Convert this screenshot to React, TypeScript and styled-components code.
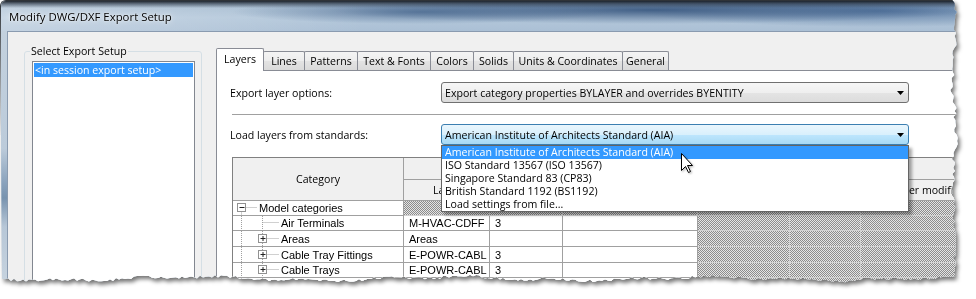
import React from 'react';
import styled, { createGlobalStyle } from 'styled-components';

const UI = `"Open Sans", "Segoe UI", "Liberation Sans", sans-serif`;
const GRID = `"Liberation Sans", Arial, sans-serif`;
const FS = '10.6px';

const GlobalStyle = createGlobalStyle`
  html, body {
    margin: 0;
    padding: 0;
    background: #fff;
  }
  body {
    font-family: ${UI};
    font-size: ${FS};
    color: #000;
  }
`;

// torn-paper outline of the cut-out screenshot (right and bottom edges)
const tornEdge = (() => {
  let s = 11;
  const rnd = () => {
    s = (s * 16807) % 2147483647;
    return s / 2147483647;
  };
  const pts: string[] = ['0px 0px'];
  for (let y = 0; y <= 276; y += 3) {
    const x = 954 + Math.sin(y / 17) * 1.6 + Math.sin(y / 5.3) * 0.9 + (rnd() - 0.5) * 3.2;
    pts.push(`${x.toFixed(1)}px ${y}px`);
  }
  for (let x = 950; x >= 0; x -= 3) {
    const y = 278.5 + Math.sin(x / 41) * 1.6 + Math.sin(x / 13) * 0.9 + (rnd() - 0.5) * 2.8;
    pts.push(`${x}px ${y.toFixed(1)}px`);
  }
  return `polygon(${pts.join(', ')})`;
})();

const CHECKER = `
  background-color: #b4b4b4;
  background-image: repeating-conic-gradient(#8c8c8c 0% 25%, #e4e4e4 0% 50%);
  background-size: 2px 2px;
`;

const Stage = styled.div`
  width: 976px;
  height: 299px;
  overflow: hidden;
  background: #fff;
`;

const Shadow = styled.div`
  width: 964px;
  height: 292px;
  filter: drop-shadow(2px 3px 2px rgba(0, 0, 0, 0.55));
`;

const Win = styled.div`
  box-sizing: border-box;
  width: 964px;
  height: 292px;
  display: flex;
  flex-direction: column;
  border-top: 1px solid #2f3338;
  border-left: 1px solid #2f3338;
  border-top-left-radius: 6px;
  background: #c6d3df;
  clip-path: ${tornEdge};
  overflow: hidden;
`;

const TitleBar = styled.div`
  flex: none;
  box-sizing: border-box;
  height: 30px;
  display: flex;
  align-items: center;
  padding: 1px 0 0 8px;
  background:
    linear-gradient(180deg, rgba(20, 26, 34, 0.92) 0px, rgba(35, 45, 60, 0.55) 3px, rgba(40, 50, 62, 0) 7px),
    radial-gradient(190px 12px at 420px 11px, rgba(55, 88, 130, 0.65), rgba(55, 88, 130, 0)),
    radial-gradient(320px 14px at 650px 9px, rgba(40, 72, 115, 0.8), rgba(40, 72, 115, 0)),
    radial-gradient(240px 16px at 880px 10px, rgba(55, 92, 140, 0.7), rgba(55, 92, 140, 0)),
    linear-gradient(90deg, rgba(255, 255, 255, 0.3) 0%, rgba(255, 255, 255, 0) 38%),
    linear-gradient(180deg, #9fb6cc 0%, #b3c7da 55%, #abc0d5 100%);
`;

const Caption = styled.span`
  font-family: ${UI};
  font-size: 11.4px;
  color: #000;
  text-shadow: 0 0 6px rgba(255, 255, 255, 0.9), 0 0 2px rgba(255, 255, 255, 0.8);
`;

const Frame = styled.div`
  flex: 1;
  min-height: 0;
  display: flex;
  padding-left: 6px;
  background: linear-gradient(
    180deg,
    #c3d1de 0%,
    #bccbda 45%,
    #8aa3bd 58%,
    #7893af 64%,
    #b7c7d7 75%,
    #c9d5e0 100%
  );
`;

const Client = styled.div`
  flex: 1;
  min-width: 0;
  display: flex;
  align-items: flex-start;
  padding-left: 16px;
  background: #f0f0f0;
  border-top: 1px solid #8a9bb0;
  border-left: 1px solid #8a9bb0;
  overflow: hidden;
`;

const SetupGroup = styled.fieldset`
  box-sizing: border-box;
  flex: none;
  width: 178px;
  height: 250px;
  min-width: 0;
  margin: 12px 0 0;
  padding: 2px 6px 0 7px;
  border: 1px solid #d5dfe5;
  border-radius: 3px;
`;

const GroupTitle = styled.legend`
  padding: 0 1px;
  margin-left: -2px;
  font-family: ${UI};
  font-size: ${FS};
  line-height: 15px;
`;

const ListBox = styled.div`
  box-sizing: border-box;
  width: 163px;
  height: 230px;
  padding: 1px;
  border: 1px solid #828790;
  background: #fff;
`;

const ListItem = styled.div<{ $selected?: boolean }>`
  height: 14px;
  line-height: 14px;
  padding-left: 1px;
  font-family: ${UI};
  font-size: ${FS};
  white-space: nowrap;
  color: ${(p) => (p.$selected ? '#fff' : '#000')};
  background: ${(p) => (p.$selected ? '#3399ff' : 'transparent')};
`;

const TabControl = styled.div`
  flex: none;
  width: 760px;
  margin: 16px 0 0 14px;
`;

const TabStrip = styled.div`
  position: relative;
  z-index: 1;
  display: flex;
  align-items: flex-end;
  height: 22px;
`;

const Tab = styled.div<{ $w: number; $active?: boolean }>`
  position: relative;
  z-index: ${(p) => (p.$active ? 2 : 1)};
  box-sizing: border-box;
  flex: none;
  width: ${(p) => p.$w}px;
  height: ${(p) => (p.$active ? 23 : 19)}px;
  margin-left: -1px;
  margin-bottom: ${(p) => (p.$active ? -1 : 0)}px;
  padding-bottom: ${(p) => (p.$active ? 2 : 0)}px;
  display: flex;
  align-items: center;
  justify-content: center;
  border: 1px solid #898c95;
  border-bottom: none;
  border-radius: 2px 2px 0 0;
  font-family: ${UI};
  font-size: ${FS};
  white-space: nowrap;
  background: ${(p) =>
    p.$active
      ? '#fff'
      : 'linear-gradient(180deg, #f4f4f4 0%, #ededed 50%, #e3e3e3 51%, #dadada 100%)'};

  &:first-child {
    margin-left: 0;
  }
`;

const TabPage = styled.div`
  box-sizing: border-box;
  height: 240px;
  padding: 11px 0 0 15px;
  border: 1px solid #898c95;
  background: #fff;
`;

const OptionRow = styled.div`
  display: flex;
  align-items: center;
  height: 21px;
`;

const OptionLabel = styled.div`
  flex: none;
  width: 211px;
  margin-left: -2px;
  font-family: ${UI};
  font-size: ${FS};
  white-space: nowrap;
`;

const ComboBox = styled.div<{ $open?: boolean }>`
  position: relative;
  box-sizing: border-box;
  flex: none;
  width: 468px;
  height: 21px;
  display: flex;
  align-items: center;
  padding-left: 3px;
  border: 1px solid ${(p) => (p.$open ? '#3c7fb1' : '#707070')};
  border-radius: 3px;
  background: ${(p) =>
    p.$open
      ? 'linear-gradient(180deg, #eaf6fd 0%, #d9f0fc 50%, #bee6fd 51%, #a7d9f5 100%)'
      : 'linear-gradient(180deg, #f6f6f6 0%, #efefef 50%, #e4e4e4 51%, #dcdcdc 100%)'};
`;

const ComboText = styled.span`
  flex: 1;
  font-family: ${UI};
  font-size: ${FS};
  white-space: nowrap;
`;

const ArrowSlot = styled.svg`
  flex: none;
  margin-right: 4px;
`;

const Separator = styled.div`
  margin: 11px 0 9px;
  border-top: 1px solid #a0a0a0;
`;

const DropList = styled.div`
  position: absolute;
  z-index: 5;
  left: -1px;
  top: calc(100% + 1px);
  box-sizing: border-box;
  width: 468px;
  border: 1px solid #646464;
  background: #fff;
  box-shadow: 3px 3px 3px rgba(0, 0, 0, 0.35);
`;

const DropItem = styled.div<{ $hot?: boolean }>`
  height: 13px;
  line-height: 13px;
  padding-left: 3px;
  font-family: ${UI};
  font-size: ${FS};
  white-space: nowrap;
  color: ${(p) => (p.$hot ? '#fff' : '#000')};
  background: ${(p) => (p.$hot ? '#3399ff' : 'transparent')};
`;

const Pointer = styled.svg`
  position: absolute;
  left: 239px;
  top: 7px;
  filter: drop-shadow(1px 1px 1px rgba(0, 0, 0, 0.3));
`;

const Grid = styled.div`
  margin-top: 12px;
  display: grid;
  grid-template-columns: 171px 86px 73px 135px 92px 71px 140px;
  grid-template-rows: 22px 21px 15px 15px 16px 16px 15px 16px;
  width: max-content;
  border-top: 1px solid #808080;
  border-left: 1px solid #808080;
`;

const HeadCell = styled.div<{ $col?: string; $row?: string }>`
  grid-column: ${(p) => p.$col ?? 'auto'};
  grid-row: ${(p) => p.$row ?? 'auto'};
  display: flex;
  align-items: center;
  justify-content: center;
  overflow: hidden;
  background: #f0f0f0;
  border-right: 1px solid #a0a0a0;
  border-bottom: 1px solid #a0a0a0;
  font-family: ${UI};
  font-size: ${FS};
  white-space: nowrap;
`;

const CategoryCell = styled.div`
  display: flex;
  align-items: center;
  overflow: hidden;
  background: #fff;
  border-right: 1px solid #a0a0a0;
  border-bottom: 1px solid #a0a0a0;
  font-family: ${GRID};
  font-size: 11px;
  white-space: nowrap;
`;

const Cell = styled.div<{ $hatch?: boolean }>`
  display: flex;
  align-items: center;
  padding-left: 5px;
  overflow: hidden;
  border-right: 1px solid ${(p) => (p.$hatch ? '#d2d2d2' : '#a0a0a0')};
  border-bottom: 1px solid ${(p) => (p.$hatch ? '#d2d2d2' : '#a0a0a0')};
  font-family: ${GRID};
  font-size: 11px;
  white-space: nowrap;
  ${(p) => (p.$hatch ? CHECKER : 'background: #fff;')}
`;

type Node = 'minus' | 'plus' | 'leaf';

function TreeGlyph({ level, node, h, first }: { level: 0 | 1; node: Node; h: number; first?: boolean }) {
  const w = level === 0 ? 26 : 48;
  const cy = Math.floor((h - 1) / 2) + 0.5;
  const bx = level === 0 ? 8.5 : 29.5;
  const dot = { stroke: '#a0a0a0', strokeWidth: 1, strokeDasharray: '1 1' };
  return (
    <svg width={w} height={h} style={{ flex: 'none' }}>
      <line x1={8.5} y1={first ? cy + 5 : 0} x2={8.5} y2={h} {...dot} />
      {level === 1 && <line x1={29.5} y1={0} x2={29.5} y2={h} {...dot} />}
      <line x1={node === 'leaf' ? bx : bx + 5} y1={cy} x2={w - 2} y2={cy} {...dot} />
      {node !== 'leaf' && (
        <>
          <rect x={bx - 4} y={cy - 4} width={8} height={8} fill="#fff" stroke="#919191" />
          <line x1={bx - 2} y1={cy} x2={bx + 3} y2={cy} stroke="#222" />
          {node === 'plus' && <line x1={bx + 0.5} y1={cy - 2.5} x2={bx + 0.5} y2={cy + 2.5} stroke="#222" />}
        </>
      )}
    </svg>
  );
}

function Arrow() {
  return (
    <ArrowSlot width="7" height="4" viewBox="0 0 7 4">
      <polygon points="0,0 7,0 3.5,4" fill="#000" />
    </ArrowSlot>
  );
}

const TABS = [
  { label: 'Layers', w: 48 },
  { label: 'Lines', w: 42 },
  { label: 'Patterns', w: 54 },
  { label: 'Text & Fonts', w: 74 },
  { label: 'Colors', w: 44 },
  { label: 'Solids', w: 41 },
  { label: 'Units & Coordinates', w: 110 },
  { label: 'General', w: 47 },
];

const STANDARDS = [
  'American Institute of Architects Standard (AIA)',
  'ISO Standard 13567 (ISO 13567)',
  'Singapore Standard 83 (CP83)',
  'British Standard 1192 (BS1192)',
  'Load settings from file...',
];

const ROWS: { name: string; node: Node; layer: string; color: string; h: number }[] = [
  { name: 'Air Terminals', node: 'leaf', layer: 'M-HVAC-CDFF', color: '3', h: 14 },
  { name: 'Areas', node: 'plus', layer: 'Areas', color: '', h: 15 },
  { name: 'Cable Tray Fittings', node: 'plus', layer: 'E-POWR-CABL', color: '3', h: 15 },
  { name: 'Cable Trays', node: 'plus', layer: 'E-POWR-CABL', color: '3', h: 14 },
  { name: 'Casework', node: 'plus', layer: 'Q-CASE', color: '3', h: 15 },
];

export default function App() {
  return (
    <Stage>
      <GlobalStyle />
      <Shadow>
        <Win>
          <TitleBar>
            <Caption>Modify DWG/DXF Export Setup</Caption>
          </TitleBar>
          <Frame>
            <Client>
              <SetupGroup>
                <GroupTitle>Select Export Setup</GroupTitle>
                <ListBox>
                  <ListItem $selected>&lt;in session export setup&gt;</ListItem>
                </ListBox>
              </SetupGroup>

              <TabControl>
                <TabStrip>
                  {TABS.map((t, i) => (
                    <Tab key={t.label} $w={t.w} $active={i === 0}>
                      {t.label}
                    </Tab>
                  ))}
                </TabStrip>
                <TabPage>
                  <OptionRow>
                    <OptionLabel>Export layer options:</OptionLabel>
                    <ComboBox>
                      <ComboText>Export category properties BYLAYER and overrides BYENTITY</ComboText>
                      <Arrow />
                    </ComboBox>
                  </OptionRow>
                  <Separator />
                  <OptionRow>
                    <OptionLabel>Load layers from standards:</OptionLabel>
                    <ComboBox $open>
                      <ComboText>{STANDARDS[0]}</ComboText>
                      <Arrow />
                      <DropList>
                        {STANDARDS.map((s, i) => (
                          <DropItem key={s} $hot={i === 0}>
                            {s}
                          </DropItem>
                        ))}
                        <Pointer width="13" height="21" viewBox="0 0 13 21">
                          <path
                            d="M0.5 0.5 L0.5 17.5 L4.5 13.5 L7.5 19.5 L9.5 18.5 L6.5 12.5 L11.5 12.5 Z"
                            fill="#fff"
                            stroke="#000"
                            strokeWidth="1"
                          />
                        </Pointer>
                      </DropList>
                    </ComboBox>
                  </OptionRow>

                  <Grid>
                    <HeadCell $row="span 2">Category</HeadCell>
                    <HeadCell $col="span 3" />
                    <HeadCell $col="span 3" />
                    <HeadCell>Layer</HeadCell>
                    <HeadCell />
                    <HeadCell />
                    <HeadCell />
                    <HeadCell />
                    <HeadCell>Layer modifiers</HeadCell>

                    <CategoryCell>
                      <TreeGlyph level={0} node="minus" h={14} first />
                      Model categories
                    </CategoryCell>
                    {[0, 1, 2, 3, 4, 5].map((k) => (
                      <Cell key={k} $hatch />
                    ))}

                    {ROWS.map((r) => (
                      <React.Fragment key={r.name}>
                        <CategoryCell>
                          <TreeGlyph level={1} node={r.node} h={r.h} />
                          {r.name}
                        </CategoryCell>
                        <Cell>{r.layer}</Cell>
                        <Cell>{r.color}</Cell>
                        <Cell />
                        <Cell $hatch />
                        <Cell $hatch />
                        <Cell $hatch />
                      </React.Fragment>
                    ))}
                  </Grid>
                </TabPage>
              </TabControl>
            </Client>
          </Frame>
        </Win>
      </Shadow>
    </Stage>
  );
}
